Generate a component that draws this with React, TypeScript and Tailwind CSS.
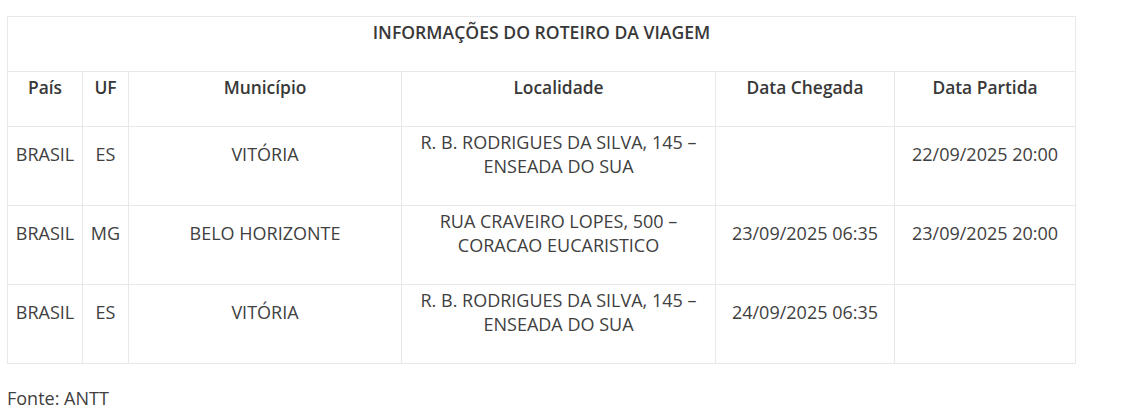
import React from "react";

const rows = [
  { pais: "BRASIL", uf: "ES", mun: "VITÓRIA", loc: ["R. B. RODRIGUES DA SILVA, 145 –", "ENSEADA DO SUA"], cheg: "", part: "22/09/2025 20:00" },
  { pais: "BRASIL", uf: "MG", mun: "BELO HORIZONTE", loc: ["RUA CRAVEIRO LOPES, 500 –", "CORACAO EUCARISTICO"], cheg: "23/09/2025 06:35", part: "23/09/2025 20:00" },
  { pais: "BRASIL", uf: "ES", mun: "VITÓRIA", loc: ["R. B. RODRIGUES DA SILVA, 145 –", "ENSEADA DO SUA"], cheg: "24/09/2025 06:35", part: "" },
];

function Cell({ children, head = false }: { children?: React.ReactNode; head?: boolean }) {
  return (
    <td className={`border border-[#e8e8e8] px-1 py-[3px] align-middle text-center ${head ? "font-semibold text-[17.4px] text-[#383838]" : ""}`}>
      <div className="mb-6 leading-6">{children}</div>
    </td>
  );
}

export default function App() {
  return (
    <div className="bg-white min-h-[417px] pt-4 pl-[7px] text-[#404040] text-[18px]" style={{ fontFamily: '"Open Sans", sans-serif' }}>
      <table className="table-fixed border-collapse w-[1068px]">
        <colgroup>
          <col className="w-[75px]" />
          <col className="w-[46px]" />
          <col className="w-[273px]" />
          <col className="w-[314px]" />
          <col className="w-[179px]" />
          <col className="w-[181px]" />
        </colgroup>
        <tbody>
          <tr>
            <td colSpan={6} className="border border-[#e8e8e8] px-1 py-[3px] text-center font-semibold text-[17.6px] text-[#383838]">
              <div className="mb-6 leading-6">INFORMAÇÕES DO ROTEIRO DA VIAGEM</div>
            </td>
          </tr>
          <tr>
            <Cell head>País</Cell>
            <Cell head>UF</Cell>
            <Cell head>Município</Cell>
            <Cell head>Localidade</Cell>
            <Cell head>Data Chegada</Cell>
            <Cell head>Data Partida</Cell>
          </tr>
          {rows.map((r, i) => (
            <tr key={i}>
              <Cell>{r.pais}</Cell>
              <Cell>{r.uf}</Cell>
              <Cell>{r.mun}</Cell>
              <Cell>
                {r.loc[0]}
                <br />
                {r.loc[1]}
              </Cell>
              <Cell>{r.cheg}</Cell>
              <Cell>{r.part}</Cell>
            </tr>
          ))}
        </tbody>
      </table>
      <p className="mt-[22px] leading-6">Fonte: ANTT</p>
    </div>
  );
}
